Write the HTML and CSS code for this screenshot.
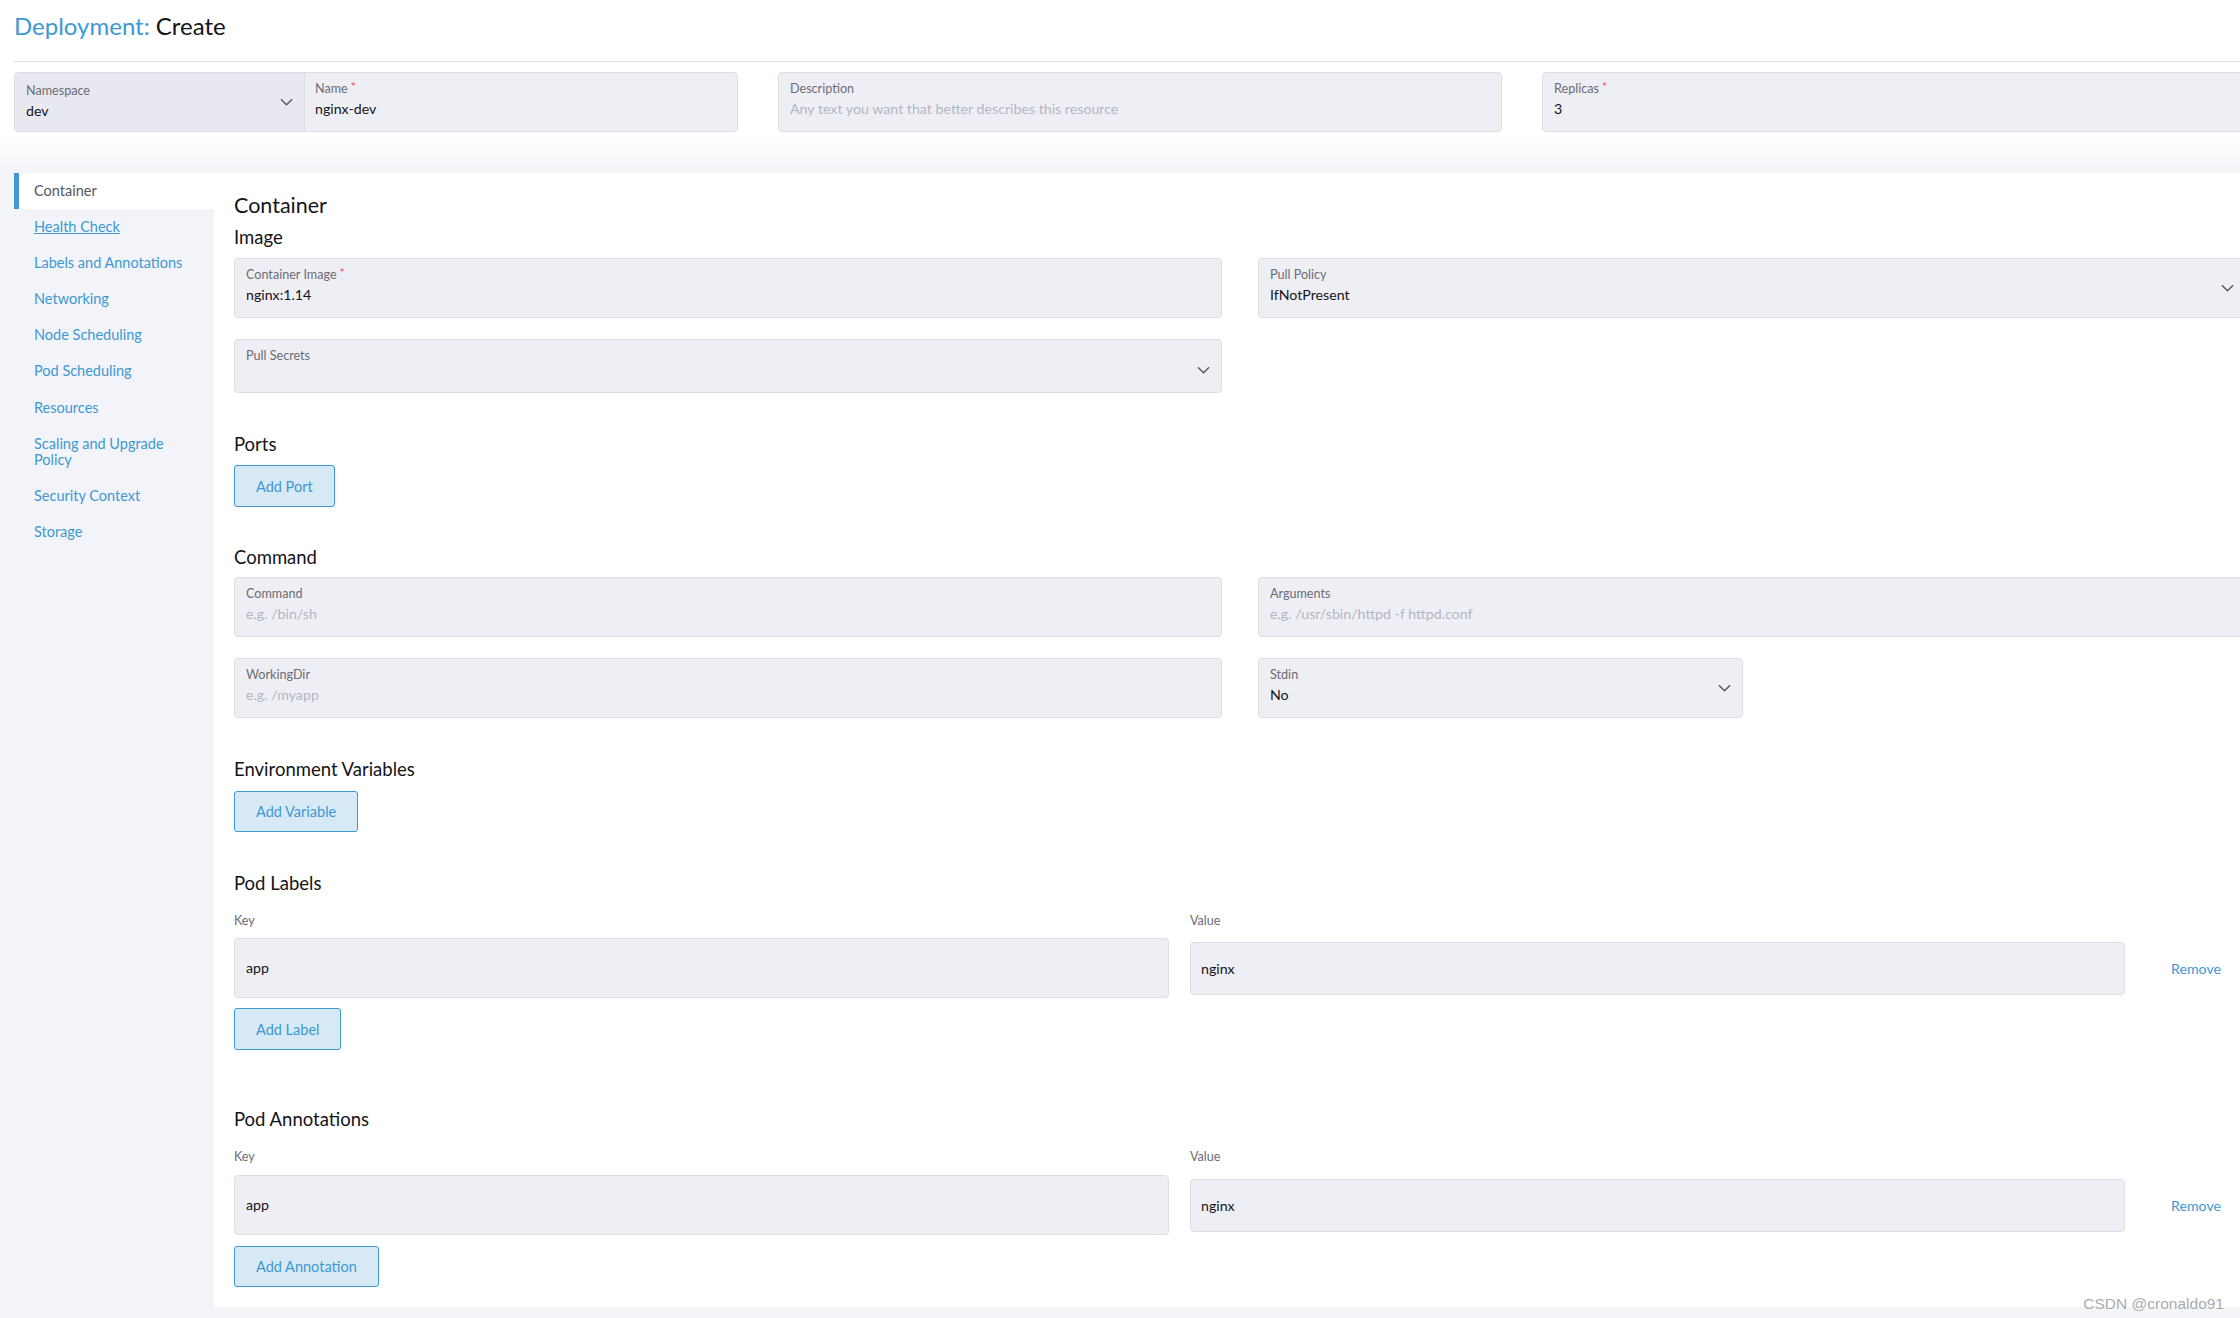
FILE: index.html
```html
<!DOCTYPE html>
<html lang="en">
<head>
<meta charset="utf-8">
<title>Deployment: Create</title>
<link rel="stylesheet" href="styles.css">
</head>
<body>
<div class="top">
  <h1 class="title"><span class="title-type">Deployment:</span> Create</h1>
  <div class="rule"></div>
  <div class="meta">
    <div class="field ns-name">
      <div class="ns">
        <div class="lbl">Namespace</div>
        <div class="val">dev</div>
        <svg class="chev" viewBox="0 0 14 8"><path d="M1 1l6 6 6-6" fill="none" stroke="#55565e" stroke-width="1.5"/></svg>
      </div>
      <div class="nm">
        <div class="lbl">Name<span class="req">*</span></div>
        <div class="val">nginx-dev</div>
      </div>
    </div>
    <div class="field">
      <div class="lbl">Description</div>
      <div class="val ph">Any text you want that better describes this resource</div>
    </div>
    <div class="field">
      <div class="lbl">Replicas<span class="req">*</span></div>
      <div class="val">3</div>
    </div>
  </div>
</div>

<div class="panel">
  <nav class="tabs">
    <div class="tab active">Container</div>
    <div class="tab hover">Health Check</div>
    <div class="tab">Labels and Annotations</div>
    <div class="tab">Networking</div>
    <div class="tab">Node Scheduling</div>
    <div class="tab">Pod Scheduling</div>
    <div class="tab">Resources</div>
    <div class="tab">Scaling and Upgrade Policy</div>
    <div class="tab">Security Context</div>
    <div class="tab">Storage</div>
  </nav>

  <main class="content">
    <h2 class="h-main">Container</h2>
    <h3 class="h-sub h-image">Image</h3>
    <div class="grid2 mt10">
      <div class="field">
        <div class="lbl">Container Image<span class="req">*</span></div>
        <div class="val">nginx:1.14</div>
      </div>
      <div class="field">
        <div class="lbl">Pull Policy</div>
        <div class="val">IfNotPresent</div>
        <svg class="chev" viewBox="0 0 14 8"><path d="M1 1l6 6 6-6" fill="none" stroke="#55565e" stroke-width="1.5"/></svg>
      </div>
    </div>
    <div class="grid2 mt21">
      <div class="field short">
        <div class="lbl">Pull Secrets</div>
        <svg class="chev chev-low" viewBox="0 0 14 8"><path d="M1 1l6 6 6-6" fill="none" stroke="#55565e" stroke-width="1.5"/></svg>
      </div>
    </div>

    <section class="sec">
      <h3 class="h-sub">Ports</h3>
      <button class="btn">Add Port</button>
    </section>

    <section class="sec sec-cmd">
      <h3 class="h-sub">Command</h3>
      <div class="grid2 mt9">
        <div class="field">
          <div class="lbl">Command</div>
          <div class="val ph">e.g. /bin/sh</div>
        </div>
        <div class="field">
          <div class="lbl">Arguments</div>
          <div class="val ph">e.g. /usr/sbin/httpd -f httpd.conf</div>
        </div>
      </div>
      <div class="grid2 mt21">
        <div class="field">
          <div class="lbl">WorkingDir</div>
          <div class="val ph">e.g. /myapp</div>
        </div>
        <div class="halves">
          <div class="field">
            <div class="lbl">Stdin</div>
            <div class="val">No</div>
            <svg class="chev" viewBox="0 0 14 8"><path d="M1 1l6 6 6-6" fill="none" stroke="#55565e" stroke-width="1.5"/></svg>
          </div>
        </div>
      </div>
    </section>

    <section class="sec sec-env">
      <h3 class="h-sub">Environment Variables</h3>
      <button class="btn btn-11">Add Variable</button>
    </section>

    <section class="sec sec-env">
      <h3 class="h-sub">Pod Labels</h3>
      <div class="kv-head mt19">
        <div class="kv-lbl">Key</div>
        <div class="kv-lbl">Value</div>
        <div></div>
      </div>
      <div class="kv-row mt9">
        <div class="kv-key">app</div>
        <div class="kv-val">nginx</div>
        <a class="remove">Remove</a>
      </div>
      <button class="btn">Add Label</button>
    </section>

    <section class="sec sec-ann">
      <h3 class="h-sub">Pod Annotations</h3>
      <div class="kv-head mt19">
        <div class="kv-lbl">Key</div>
        <div class="kv-lbl">Value</div>
        <div></div>
      </div>
      <div class="kv-row mt10">
        <div class="kv-key">app</div>
        <div class="kv-val">nginx</div>
        <a class="remove">Remove</a>
      </div>
      <button class="btn btn-11">Add Annotation</button>
    </section>
  </main>
</div>

<div class="watermark">CSDN @cronaldo91</div>
</body>
</html>
```

FILE: styles.css
```css
* { box-sizing: border-box; }

html, body {
  margin: 0;
  padding: 0;
}

body {
  width: 2240px;
  height: 1318px;
  overflow: hidden;
  position: relative;
  background: #f4f5f9;
  font-family: Lato, "Liberation Sans", Arial, sans-serif;
  color: #141419;
  font-size: 14px;
}

/* ---------- header ---------- */
.top {
  width: 2266px;
  height: 173px;
  padding-left: 14px;
  background: linear-gradient(to bottom, #ffffff 0, #ffffff 134px, #f4f5f9 173px);
}

.title {
  margin: 0;
  padding-top: 10px;
  height: 61px;
  font-size: 24px;
  line-height: 32px;
  font-weight: 400;
  color: #141419;
}

.title-type { color: #3d98d3; }

.rule {
  height: 1px;
  background: #dcdee7;
}

.meta {
  margin-top: 10px;
  display: grid;
  grid-template-columns: 724px 724px 724px;
  column-gap: 40px;
}

/* ---------- fields ---------- */
.field {
  position: relative;
  height: 60px;
  background: #eeeff4;
  border: 1px solid #dcdee7;
  border-radius: 4px;
  padding: 8px 11px;
}

.field.short { height: 54px; }

.lbl {
  font-size: 12.6px;
  line-height: 16px;
  color: #6c6c76;
}

.req {
  color: #f64747;
  margin-left: 3px;
  font-size: 12px;
  position: relative;
  top: -2px;
}

.val {
  margin-top: 2px;
  font-size: 14.2px;
  line-height: 20px;
  color: #141419;
  white-space: nowrap;
}

.val.ph { color: #b4b6c6; }

.chev {
  position: absolute;
  right: 11px;
  top: 50%;
  width: 13px;
  height: 8px;
  margin-top: -4px;
}

.chev-low { margin-top: 0; }

.ns-name {
  display: flex;
  padding: 0;
  overflow: hidden;
}

.ns {
  position: relative;
  width: 290px;
  height: 100%;
  padding: 10px 11px;
  background: #e8e9f0;
  border-right: 1px solid #dcdee7;
}

.nm {
  flex: 1;
  padding: 8px 10px;
}

/* ---------- panel ---------- */
.panel {
  margin-left: 14px;
  width: 2252px;
  height: 1134px;
  display: flex;
  background: #ffffff;
}

.tabs {
  width: 200px;
  flex: none;
  background: #f3f4f9;
}

.tab {
  padding: 10px 20px;
  font-size: 14.5px;
  line-height: 16.1px;
  color: #3d98d3;
}

.tab.active {
  background: #ffffff;
  border-left: 5px solid #3d98d3;
  padding-left: 15px;
  color: #55565e;
}

.tab.hover { text-decoration: underline; }

.content {
  flex: 1;
  padding: 20px 20px 21px 20px;
}

.h-main {
  margin: 0;
  font-size: 21.5px;
  line-height: 24px;
  font-weight: 400;
}

.h-sub {
  margin: 0;
  font-size: 18.5px;
  line-height: 22px;
  font-weight: 400;
}

.h-image { margin-top: 9px; }

.grid2 {
  display: grid;
  grid-template-columns: 1fr 1fr;
  column-gap: 36px;
}

.halves {
  display: grid;
  grid-template-columns: 1fr 1fr;
  column-gap: 18px;
}

.mt9 { margin-top: 9px; }
.mt10 { margin-top: 10px; }
.mt18 { margin-top: 18px; }
.mt19 { margin-top: 19px; }
.mt21 { margin-top: 21px; }

.sec { margin-top: 40px; }
.sec-cmd { margin-top: 39px; }
.sec-env { margin-top: 40px; }
.sec-ann { margin-top: 58px; }

.btn {
  display: block;
  margin-top: 10px;
  height: 42px;
  padding: 0 21px;
  border: 1px solid #3d98d3;
  border-radius: 3px;
  background: #d8e9f6;
  color: #3d98d3;
  font-family: Lato, "Liberation Sans", Arial, sans-serif;
  font-size: 14.5px;
}

.btn-11 { margin-top: 11px; height: 41px; }

/* ---------- key / value ---------- */
.kv-head,
.kv-row {
  display: grid;
  grid-template-columns: 1fr 1fr 100px;
  column-gap: 21px;
  align-items: center;
}

.kv-lbl {
  font-size: 12.6px;
  line-height: 16px;
  color: #6c6c76;
}

.kv-key {
  height: 60px;
  line-height: 58px;
  padding: 0 11px;
  background: #eeeff4;
  border: 1px solid #dcdee7;
  border-radius: 4px;
  font-size: 14.2px;
}

.kv-val {
  height: 53px;
  line-height: 51px;
  padding: 0 10px;
  background: #eeeff4;
  border: 1px solid #dcdee7;
  border-radius: 4px;
  font-size: 14.2px;
}

.remove {
  text-align: center;
  color: #3d98d3;
  font-size: 14.2px;
}

/* ---------- watermark ---------- */
.watermark {
  position: absolute;
  right: 16px;
  bottom: 5px;
  font-family: "Liberation Sans", Arial, sans-serif;
  font-size: 15.5px;
  color: #a9aab0;
  text-shadow: 0 0 1px #ffffff;
}
```
